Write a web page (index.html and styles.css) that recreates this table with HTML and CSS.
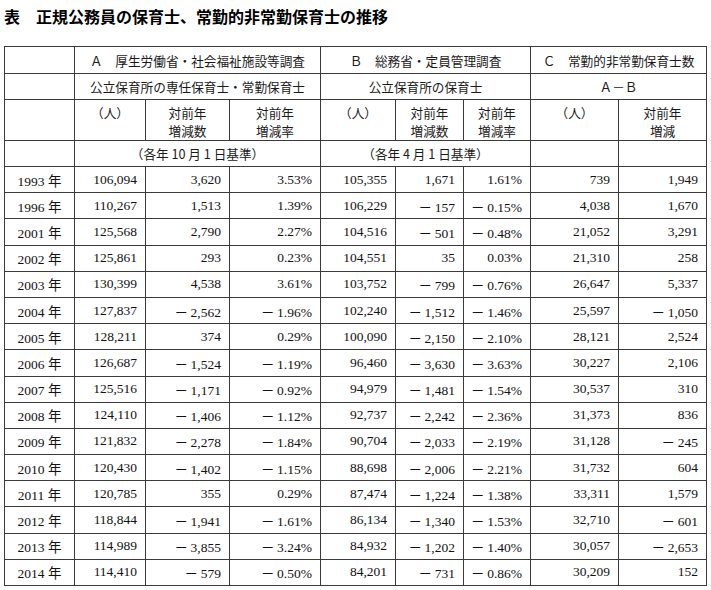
FILE: index.html
```html
<!DOCTYPE html>
<html lang="ja">
<head>
<meta charset="utf-8">
<link rel="stylesheet" href="styles.css">
</head>
<body>
<div class="title">表　正規公務員の保育士、常勤的非常勤保育士の推移</div>
<table class="tbl">
<colgroup>
<col class="c1"><col class="c2"><col class="c3"><col class="c4"><col class="c5"><col class="c6"><col class="c7"><col class="c8"><col class="c9">
</colgroup>
<thead>
<tr class="h1">
<td></td><td colspan="3" class="hc">Ａ　厚生労働省・社会福祉施設等調査</td><td colspan="3" class="hc">Ｂ　総務省・定員管理調査</td><td colspan="2" class="hc">Ｃ　常勤的非常勤保育士数</td>
</tr>
<tr class="h2">
<td></td><td colspan="3" class="hc">公立保育所の専任保育士・常勤保育士</td><td colspan="3" class="hc">公立保育所の保育士</td><td colspan="2" class="hc">Ａ－Ｂ</td>
</tr>
<tr class="h3">
<td></td><td class="ht">（人）</td><td class="ht">対前年<br>増減数</td><td class="ht">対前年<br>増減率</td><td class="ht">（人）</td><td class="ht">対前年<br>増減数</td><td class="ht">対前年<br>増減率</td><td class="ht">（人）</td><td class="ht">対前年<br>増減</td>
</tr>
<tr class="h4">
<td></td><td colspan="3" class="hc">（各年 10 月 1 日基準）</td><td colspan="3" class="hc">（各年 4 月 1 日基準）</td><td></td><td></td>
</tr>
</thead>
<tbody>
<tr><td class="yr">1993 年</td><td>106,094</td><td>3,620</td><td>3.53%</td><td>105,355</td><td>1,671</td><td>1.61%</td><td>739</td><td>1,949</td></tr>
<tr><td class="yr">1996 年</td><td>110,267</td><td>1,513</td><td>1.39%</td><td>106,229</td><td>－&thinsp;157</td><td>－&thinsp;0.15%</td><td>4,038</td><td>1,670</td></tr>
<tr><td class="yr">2001 年</td><td>125,568</td><td>2,790</td><td>2.27%</td><td>104,516</td><td>－&thinsp;501</td><td>－&thinsp;0.48%</td><td>21,052</td><td>3,291</td></tr>
<tr><td class="yr">2002 年</td><td>125,861</td><td>293</td><td>0.23%</td><td>104,551</td><td>35</td><td>0.03%</td><td>21,310</td><td>258</td></tr>
<tr><td class="yr">2003 年</td><td>130,399</td><td>4,538</td><td>3.61%</td><td>103,752</td><td>－&thinsp;799</td><td>－&thinsp;0.76%</td><td>26,647</td><td>5,337</td></tr>
<tr><td class="yr">2004 年</td><td>127,837</td><td>－&thinsp;2,562</td><td>－&thinsp;1.96%</td><td>102,240</td><td>－&thinsp;1,512</td><td>－&thinsp;1.46%</td><td>25,597</td><td>－&thinsp;1,050</td></tr>
<tr><td class="yr">2005 年</td><td>128,211</td><td>374</td><td>0.29%</td><td>100,090</td><td>－&thinsp;2,150</td><td>－&thinsp;2.10%</td><td>28,121</td><td>2,524</td></tr>
<tr><td class="yr">2006 年</td><td>126,687</td><td>－&thinsp;1,524</td><td>－&thinsp;1.19%</td><td>96,460</td><td>－&thinsp;3,630</td><td>－&thinsp;3.63%</td><td>30,227</td><td>2,106</td></tr>
<tr><td class="yr">2007 年</td><td>125,516</td><td>－&thinsp;1,171</td><td>－&thinsp;0.92%</td><td>94,979</td><td>－&thinsp;1,481</td><td>－&thinsp;1.54%</td><td>30,537</td><td>310</td></tr>
<tr><td class="yr">2008 年</td><td>124,110</td><td>－&thinsp;1,406</td><td>－&thinsp;1.12%</td><td>92,737</td><td>－&thinsp;2,242</td><td>－&thinsp;2.36%</td><td>31,373</td><td>836</td></tr>
<tr><td class="yr">2009 年</td><td>121,832</td><td>－&thinsp;2,278</td><td>－&thinsp;1.84%</td><td>90,704</td><td>－&thinsp;2,033</td><td>－&thinsp;2.19%</td><td>31,128</td><td>－&thinsp;245</td></tr>
<tr><td class="yr">2010 年</td><td>120,430</td><td>－&thinsp;1,402</td><td>－&thinsp;1.15%</td><td>88,698</td><td>－&thinsp;2,006</td><td>－&thinsp;2.21%</td><td>31,732</td><td>604</td></tr>
<tr><td class="yr">2011 年</td><td>120,785</td><td>355</td><td>0.29%</td><td>87,474</td><td>－&thinsp;1,224</td><td>－&thinsp;1.38%</td><td>33,311</td><td>1,579</td></tr>
<tr><td class="yr">2012 年</td><td>118,844</td><td>－&thinsp;1,941</td><td>－&thinsp;1.61%</td><td>86,134</td><td>－&thinsp;1,340</td><td>－&thinsp;1.53%</td><td>32,710</td><td>－&thinsp;601</td></tr>
<tr><td class="yr">2013 年</td><td>114,989</td><td>－&thinsp;3,855</td><td>－&thinsp;3.24%</td><td>84,932</td><td>－&thinsp;1,202</td><td>－&thinsp;1.40%</td><td>30,057</td><td>－&thinsp;2,653</td></tr>
<tr><td class="yr">2014 年</td><td>114,410</td><td>－&thinsp;579</td><td>－&thinsp;0.50%</td><td>84,201</td><td>－&thinsp;731</td><td>－&thinsp;0.86%</td><td>30,209</td><td>152</td></tr>
</tbody>
</table>
</body>
</html>
```

FILE: styles.css
```css
html, body {
  margin: 0;
  padding: 0;
  background: #ffffff;
}
body {
  color: #111111;
  font-family: "Liberation Serif", "Noto Sans CJK JP", serif;
}
.title {
  height: 46px;
  line-height: 33px;
  padding-left: 4px;
  font-family: "Noto Sans CJK JP", sans-serif;
  font-weight: 700;
  font-size: 16px;
  color: #000000;
  white-space: nowrap;
}
.tbl {
  margin-left: 4px;
  width: 703px;
  box-sizing: border-box;
  table-layout: fixed;
  border-collapse: separate;
  border-spacing: 0;
  border-top: 1px solid #3a3a3a;
  border-left: 1px solid #3a3a3a;
}
.c1 { width: 70px; }
.c2 { width: 71px; }
.c3 { width: 84px; }
.c4 { width: 91px; }
.c5 { width: 75px; }
.c6 { width: 68px; }
.c7 { width: 67px; }
.c8 { width: 88px; }
.c9 { width: 88px; }
.tbl td {
  box-sizing: border-box;
  border-right: 1px solid #3a3a3a;
  border-bottom: 1px solid #3a3a3a;
  padding: 0 8px 0 0;
  font-size: 13.5px;
  text-align: right;
  vertical-align: middle;
  white-space: nowrap;
  overflow: hidden;
}
.tbl thead td {
  font-family: "Noto Sans CJK JP", sans-serif;
  font-size: 12.65px;
  color: #1a1a1a;
  text-align: center;
  padding: 0;
}
.h1 td { height: 27px; }
.h2 td { height: 26px; }
.h3 td { height: 40px; }
.h4 td { height: 26px; }
.tbl thead td.ht {
  vertical-align: top;
  padding-top: 4px;
  line-height: 18px;
}
.tbl tbody td { height: 26.2px; }
.tbl tbody td.yr {
  text-align: center;
  padding: 0;
}
```
